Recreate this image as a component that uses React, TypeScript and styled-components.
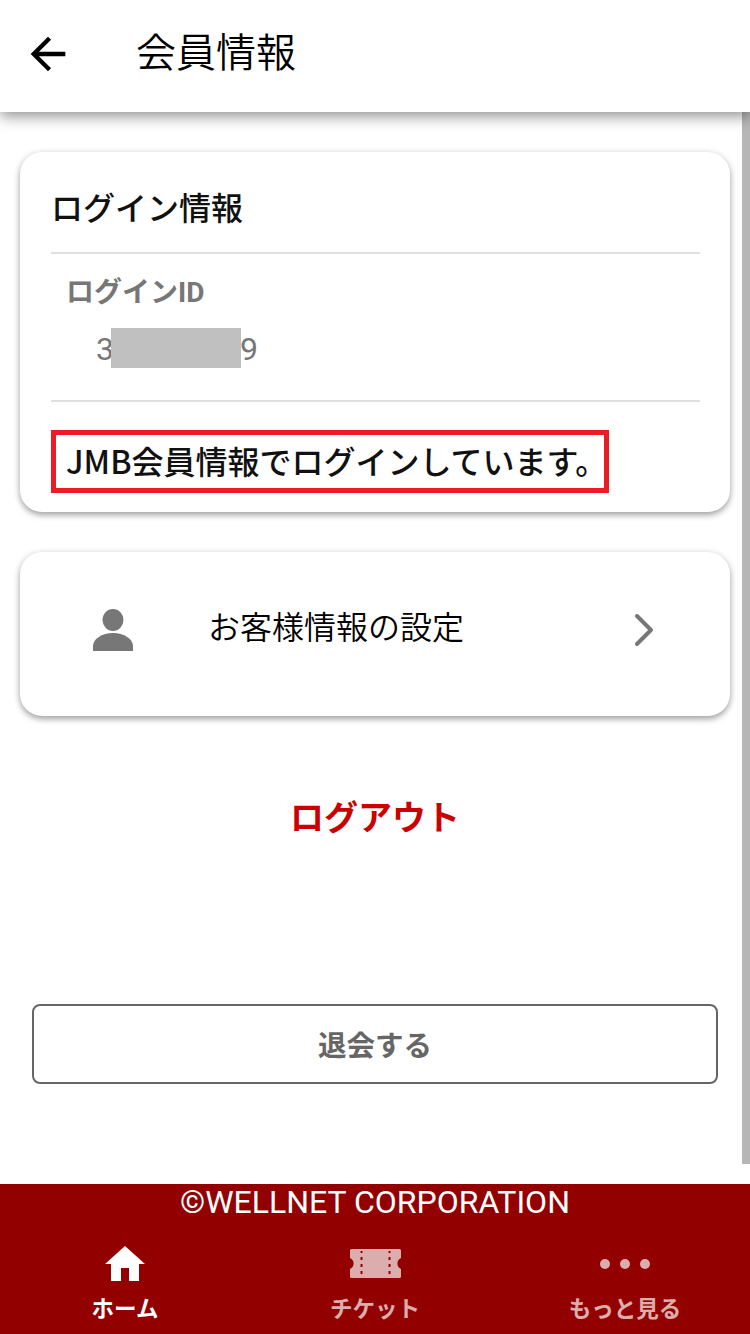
import styled, { createGlobalStyle } from "styled-components";

const GlobalStyle = createGlobalStyle`
    html, body {
        margin: 0;
        padding: 0;
        background-color: white;
    }
    * {
        box-sizing: border-box;
    }
`;

const Page = styled.div`
    position: relative;
    width: 750px;
    height: 1334px;
    display: flex;
    flex-direction: column;
    overflow: hidden;
    background-color: white;
    font-family: Roboto, "Noto Sans CJK JP", sans-serif;
`;

const Header = styled.header`
    position: relative;
    z-index: 2;
    height: 112px;
    flex-shrink: 0;
    display: flex;
    align-items: center;
    padding-left: 22px;
    background-color: white;
    box-shadow: 0 4px 14px rgba(0, 0, 0, 0.45);
`;

const BackIcon = styled.svg`
    width: 52px;
    height: 52px;
    margin-top: -4px;
    fill: black;
`;

const Title = styled.h1`
    margin: -4px 0 0 62px;
    font-size: 40px;
    line-height: 1;
    font-weight: 350;
    color: black;
`;

const Scrollbar = styled.div`
    position: absolute;
    top: 112px;
    right: 0;
    width: 8px;
    height: 1052px;
    background-color: #b6b6b6;
`;

const Main = styled.main`
    flex: 1;
    display: flex;
    flex-direction: column;
    padding: 40px 20px 0;
`;

const Card = styled.section`
    width: 710px;
    background-color: white;
    border-radius: 22px;
    box-shadow: 0 3px 6px rgba(0, 0, 0, 0.35), 0 0 8px rgba(0, 0, 0, 0.06);
`;

const LoginCard = styled(Card)`
    height: 360px;
    padding: 0 30px 0 31px;
    display: flex;
    flex-direction: column;
`;

const CardTitle = styled.h2`
    margin: 0;
    height: 102px;
    padding-top: 33px;
    font-size: 32px;
    line-height: 48px;
    font-weight: 500;
    color: #111;
    border-bottom: 2px solid #e0e0e0;
`;

const InfoBlock = styled.div`
    height: 148px;
    padding: 19px 0 0 15px;
    border-bottom: 2px solid #e0e0e0;
`;

const InfoLabel = styled.div`
    font-size: 28px;
    line-height: 40px;
    font-weight: 700;
    color: #777;
`;

const InfoValue = styled.div`
    display: flex;
    align-items: center;
    height: 42px;
    margin-top: 15px;
    padding-left: 30px;
    font-size: 32px;
    color: #777;
`;

const Mask = styled.span`
    align-self: flex-start;
    width: 130px;
    height: 40px;
    margin: 0 -1px 0 -3px;
    background-color: #c0c0c0;
`;

const Notice = styled.div`
    width: 558px;
    height: 63px;
    margin-top: 28px;
    padding: 0 0 3px 10px;
    display: flex;
    align-items: center;
    font-family: "Noto Sans CJK JP", sans-serif;
    font-size: 32px;
    font-weight: 500;
    white-space: nowrap;
    color: #111;
    border: 5px solid #ed1c24;
`;

const SettingsCard = styled(Card)`
    height: 164px;
    margin-top: 40px;
    display: flex;
    align-items: center;
    padding: 0 76px 12px 73px;
`;

const PersonIcon = styled.svg`
    width: 40px;
    height: 42px;
    margin-top: 4px;
    fill: #777;
    flex-shrink: 0;
`;

const SettingsLabel = styled.span`
    flex: 1;
    margin-left: 75px;
    font-size: 32px;
    line-height: 48px;
    font-weight: 350;
    color: black;
`;

const ChevronIcon = styled.svg`
    width: 20px;
    height: 34px;
    margin-top: 4px;
    fill: none;
    stroke: #777;
    stroke-width: 4;
    stroke-linecap: round;
    stroke-linejoin: round;
`;

const Logout = styled.div`
    margin-top: 78px;
    text-align: center;
    font-size: 34px;
    line-height: 48px;
    font-weight: 700;
    color: #cc0000;
`;

const WithdrawButton = styled.button`
    width: 686px;
    height: 80px;
    margin: 162px 0 0 12px;
    padding: 0 0 2px;
    font-family: inherit;
    font-size: 28.5px;
    font-weight: 700;
    color: #666;
    background-color: white;
    border: 2px solid #666;
    border-radius: 8px;
`;

const Footer = styled.footer`
    height: 150px;
    flex-shrink: 0;
    background-color: #930000;
`;

const Copyright = styled.div`
    height: 36px;
    text-align: center;
    font-size: 32px;
    line-height: 36px;
    color: white;
`;

const Tabs = styled.nav`
    display: grid;
    grid-template-columns: repeat(3, 250px);
`;

const Tab = styled.div<{ $active?: boolean }>`
    display: flex;
    flex-direction: column;
    align-items: center;
    color: white;
    opacity: ${(p) => (p.$active ? 1 : 0.68)};
`;

const TabIcon = styled.svg`
    width: 56px;
    height: 48px;
    margin-top: 20px;
    fill: white;
`;

const TabLabel = styled.span`
    margin-top: 5px;
    font-size: 22.5px;
    line-height: 32px;
    font-weight: 700;
`;

function App() {
    return (
        <Page>
            <GlobalStyle />
            <Header>
                <BackIcon viewBox="0 0 24 24">
                    <path d="M20 11H7.83l5.59-5.59L12 4l-8 8 8 8 1.41-1.41L7.83 13H20v-2z" />
                </BackIcon>
                <Title>会員情報</Title>
            </Header>
            <Scrollbar />
            <Main>
                <LoginCard>
                    <CardTitle>ログイン情報</CardTitle>
                    <InfoBlock>
                        <InfoLabel>ログインID</InfoLabel>
                        <InfoValue>
                            3<Mask />9
                        </InfoValue>
                    </InfoBlock>
                    <Notice>JMB会員情報でログインしています。</Notice>
                </LoginCard>
                <SettingsCard>
                    <PersonIcon viewBox="0 0 40 42">
                        <ellipse cx="20" cy="11" rx="10.5" ry="11" />
                        <path d="M0 42v-5C0 30 9 24 20 24s20 6 20 13v5z" />
                    </PersonIcon>
                    <SettingsLabel>お客様情報の設定</SettingsLabel>
                    <ChevronIcon viewBox="0 0 20 34">
                        <path d="M3 3l14 14L3 31" />
                    </ChevronIcon>
                </SettingsCard>
                <Logout>ログアウト</Logout>
                <WithdrawButton>退会する</WithdrawButton>
            </Main>
            <Footer>
                <Copyright>©WELLNET CORPORATION</Copyright>
                <Tabs>
                    <Tab $active>
                        <TabIcon viewBox="0 0 28 24">
                            <path d="M12 20.500v-6.500h4v6.500h5V12h3L14 3 4 12h3v8.500z" />
                        </TabIcon>
                        <TabLabel>ホーム</TabLabel>
                    </Tab>
                    <Tab>
                        <TabIcon viewBox="0 0 56 48">
                            <path
                                fillRule="evenodd"
                                d="M4.500 9h48a1.500 1.500 0 0 1 1.500 1.500V18a6 6 0 0 0 0 11v7.500a1.500 1.500 0 0 1-1.500 1.500h-48a1.500 1.500 0 0 1-1.500-1.500V29a6 6 0 0 0 0-11v-7.500A1.500 1.500 0 0 1 4.500 9zM13.500 11v2h2v-2zM13.500 17v3h2v-3zM13.500 24v3h2v-3zM13.500 31v3h2v-3zM41.500 11v2h2v-2zM41.500 17v3h2v-3zM41.500 24v3h2v-3zM41.500 31v3h2v-3z"
                            />
                        </TabIcon>
                        <TabLabel>チケット</TabLabel>
                    </Tab>
                    <Tab>
                        <TabIcon viewBox="0 0 56 48">
                            <circle cx="8" cy="24" r="5" />
                            <circle cx="28" cy="24" r="5" />
                            <circle cx="48" cy="24" r="5" />
                        </TabIcon>
                        <TabLabel>もっと見る</TabLabel>
                    </Tab>
                </Tabs>
            </Footer>
        </Page>
    );
}

export default App;
